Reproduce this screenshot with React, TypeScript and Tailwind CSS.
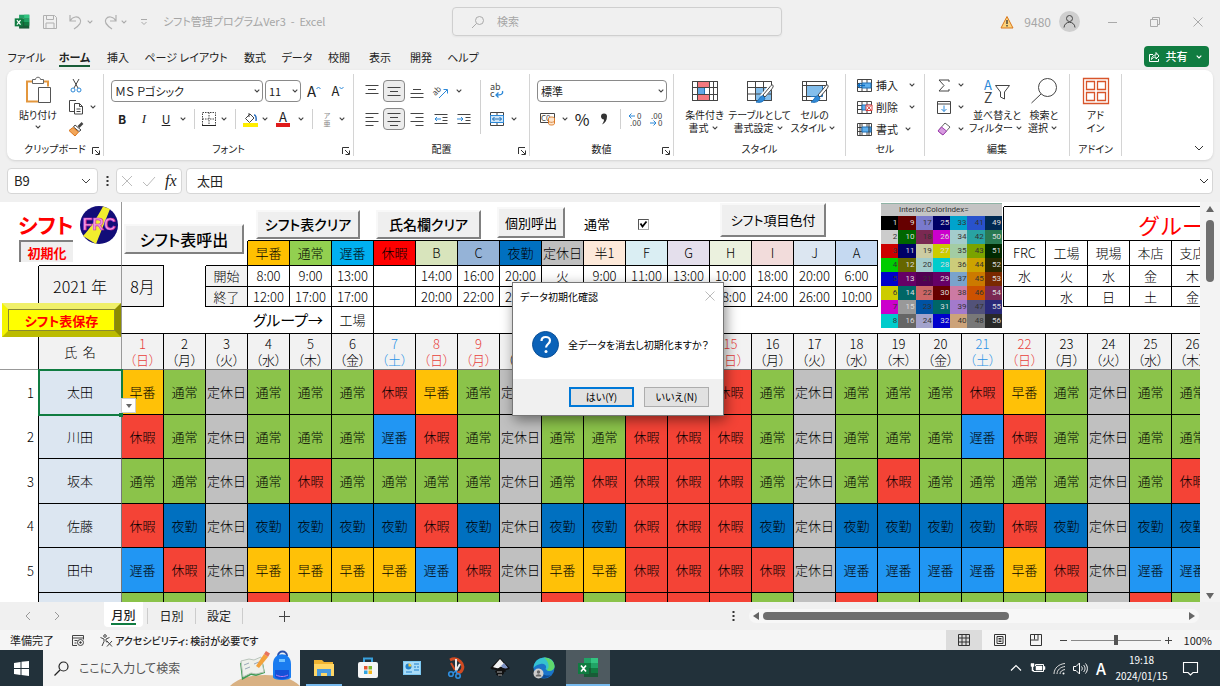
import { useState } from 'react';
import type { ReactNode } from 'react';

const SHIFTS: Record<string, { label: string; color: string }> = {
  H: { label: '早番', color: 'bg-[#ffc107]' },
  T: { label: '通常', color: 'bg-[#8bc34a]' },
  C: { label: '定休日', color: 'bg-[#c0c0c0]' },
  K: { label: '休暇', color: 'bg-[#f44336]' },
  D: { label: '遅番', color: 'bg-[#2196f3]' },
  Y: { label: '夜勤', color: 'bg-[#0070c0]' },
};

// one letter per day, see SHIFTS
const STAFF = [
  { name: '太田', days: 'HTCTTTKHTCTTTKKTCTTTKHTCTT', height: 'h-[45px]' },
  { name: '川田', days: 'KTCTTTDKTCTTKKKTCTTTDKTCTT', height: 'h-11' },
  { name: '坂本', days: 'TTCTKTTTTCTKKKKTCTKTTTTCTK', height: 'h-[45px]' },
  { name: '佐藤', days: 'KYCYYYYKYCYYKKKYCYYYYKYCYY', height: 'h-11' },
  { name: '田中', days: 'DKCHHHHDKCHHKKKKCDDDDHKCDD', height: 'h-[45px]' },
  { name: '', days: 'TTCKTTTTTCKTKKKTCKTTTTTCKT', height: 'h-11' },
];

const LEGEND = [
  { label: '早番', color: 'bg-[#ffc000]', start: '8:00', end: '12:00' },
  { label: '通常', color: 'bg-[#92d050]', start: '9:00', end: '17:00' },
  { label: '遅番', color: 'bg-[#00b0f0]', start: '13:00', end: '17:00' },
  { label: '休暇', color: 'bg-[#ff0000]', start: '', end: '' },
  { label: 'B', color: 'bg-[#d8e4bc]', start: '14:00', end: '20:00' },
  { label: 'C', color: 'bg-[#95b3d7]', start: '16:00', end: '22:00' },
  { label: '夜勤', color: 'bg-[#0070c0]', start: '20:00', end: '29:00' },
  { label: '定休日', color: 'bg-[#bfbfbf]', start: '火', end: '' },
  { label: '半1', color: 'bg-[#fde9d9]', start: '9:00', end: '' },
  { label: 'F', color: 'bg-[#daeef3]', start: '11:00', end: '' },
  { label: 'G', color: 'bg-[#e4dfec]', start: '13:00', end: '' },
  { label: 'H', color: 'bg-[#ebf1de]', start: '10:00', end: '18:00' },
  { label: 'I', color: 'bg-[#f2dcdb]', start: '18:00', end: '24:00' },
  { label: 'J', color: 'bg-[#dce6f1]', start: '20:00', end: '26:00' },
  { label: 'A', color: 'bg-[#c5d9f1]', start: '6:00', end: '10:00' },
];

const GROUPS = [
  ['FRC', '水', ''],
  ['工場', '火', '水'],
  ['現場', '水', '日'],
  ['本店', '金', '土'],
  ['支店', '木', '金'],
];

const WEEK = ['日', '月', '火', '水', '木', '金', '土'];
const RED_DAYS = [1, 8, 9, 15, 22];
const BLUE_DAYS = [7, 14, 21];

const PALETTE = [
  ['bg-black', 'bg-[#660000]', 'bg-[#7a7acc]', 'bg-[#000066]', 'bg-[#00a3cc]', 'bg-[#2952cc]', 'bg-[#002952]'],
  ['bg-[#cccccc]', 'bg-[#006600]', 'bg-[#7a2952]', 'bg-[#cc00cc]', 'bg-[#a3cccc]', 'bg-[#29a3a3]', 'bg-[#297a52]'],
  ['bg-[#cc0000]', 'bg-[#000066]', 'bg-[#cccca3]', 'bg-[#cccc00]', 'bg-[#a3cca3]', 'bg-[#7aa300]', 'bg-[#002900]'],
  ['bg-[#00cc00]', 'bg-[#666600]', 'bg-[#a3cccc]', 'bg-[#00cccc]', 'bg-[#cccc7a]', 'bg-[#cca300]', 'bg-[#292900]'],
  ['bg-[#0000cc]', 'bg-[#660066]', 'bg-[#520052]', 'bg-[#660066]', 'bg-[#7aa3cc]', 'bg-[#cc7a00]', 'bg-[#7a2900]'],
  ['bg-[#cccc00]', 'bg-[#006666]', 'bg-[#cc6666]', 'bg-[#660000]', 'bg-[#cc7aa3]', 'bg-[#cc5200]', 'bg-[#7a2952]'],
  ['bg-[#cc00cc]', 'bg-[#999999]', 'bg-[#0052a3]', 'bg-[#006666]', 'bg-[#a37acc]', 'bg-[#525279]', 'bg-[#292979]'],
  ['bg-[#00cccc]', 'bg-[#666666]', 'bg-[#a3a3cc]', 'bg-[#0000cc]', 'bg-[#cca37a]', 'bg-[#787878]', 'bg-[#292929]'],
];

const TABS = [
  { label: 'ファイル', width: 'w-[49px]' },
  { label: 'ホーム', width: 'w-[47px]' },
  { label: '挿入', width: 'w-10' },
  { label: 'ページ レイアウト', width: 'w-24' },
  { label: '数式', width: 'w-[42px]' },
  { label: 'データ', width: 'w-[42px]' },
  { label: '校閲', width: 'w-[42px]' },
  { label: '表示', width: 'w-10' },
  { label: '開発', width: 'w-[42px]' },
  { label: 'ヘルプ', width: 'w-[42px]' },
];

const Svg = ({ w, h, children }: { w: number; h: number; children: ReactNode }) => (
  <svg width={w} height={h} viewBox={`0 0 ${w} ${h}`} fill="none" stroke="#444" className="shrink-0 overflow-visible">
    {children}
  </svg>
);

const Chevron = ({ color = '#444' }: { color?: string }) => (
  <span className="flex w-3 shrink-0 items-center justify-center">
    <Svg w={6} h={4}>
      <path d="M.7.7 3 3 5.3.7" stroke={color} strokeWidth="1.1" />
    </Svg>
  </span>
);

const Sep = () => <span className="mx-[5px] h-5 w-px shrink-0 self-center bg-[#d0d0d0]" />;

const Tool = ({ label, width = 'w-[22px]', on, children }: { label: string; width?: string; on?: boolean; children: ReactNode }) => (
  <button
    aria-label={label}
    className={`flex h-[22px] shrink-0 items-center justify-center ${width} ${on ? 'rounded border border-[#888] bg-[#ececec]' : ''}`}
  >
    {children}
  </button>
);

const BigTool = ({ icon, lines, width, arrow }: { icon: ReactNode; lines: string[]; width: string; arrow?: boolean }) => (
  <button className={`flex shrink-0 flex-col items-center whitespace-nowrap text-[10px] leading-[13px] ${width}`}>
    <span className="mb-1 flex h-[27px] items-center">{icon}</span>
    <span>{lines[0]}</span>
    <span className="flex items-center">
      {lines[1]}
      {arrow && <Chevron />}
    </span>
  </button>
);

const Group = ({ title, width, launcher, children }: { title: string; width: string; launcher?: boolean; children: ReactNode }) => (
  <section className={`my-1 flex shrink-0 flex-col border-r border-[#d4d4d4] ${width}`}>
    <div className="flex h-[68px] shrink-0">{children}</div>
    <div className="relative flex h-3.5 items-center justify-center text-[10px] leading-[14px]">
      {title}
      {launcher && (
        <button aria-label={`${title}の設定`} className="absolute right-[3px] top-[5px]">
          <Svg w={8} h={8}>
            <path d="M.5 7V.5H7M3 3l4 4M7.5 3.5v4h-4" stroke="#333" />
          </Svg>
        </button>
      )}
    </div>
  </section>
);

const Lines = ({ d }: { d: string }) => (
  <Svg w={14} h={14}>
    <path d={d} />
  </Svg>
);

const ExcelLogo = ({ size }: { size: number }) => (
  <svg width={size} height={size} viewBox="0 0 22 22">
    <path d="M7 1h14v5H7z" fill="#21a366" />
    <path d="M14 1h7v5h-7z" fill="#33c481" />
    <path d="M7 6h14v5H7z" fill="#107c41" />
    <path d="M14 6h7v5h-7z" fill="#21a366" />
    <path d="M7 11h14v9H7z" fill="#185c37" />
    <path d="M14 11h7v5h-7z" fill="#107c41" />
    <path d="M1 6h11v11H1z" fill="#107c41" />
    <path d="m4 8.500 5 6M9 8.500l-5 6" stroke="#fff" strokeWidth="1.700" />
  </svg>
);

const TitleBar = () => (
  <header className="flex h-[43px] shrink-0 items-center text-[#a6a6a6]">
    <div className="flex w-[452px] shrink-0 items-center pl-3.5">
      <ExcelLogo size={16} />
      <button aria-label="上書き保存" className="ml-3">
        <Svg w={16} h={16}>
          <path d="M1.500 1.500h11l2 2v11h-13zM4.500 1.500v4h7v-4M4 14.500V9h8v5.500" stroke="#b0b0b0" />
        </Svg>
      </button>
      <button aria-label="元に戻す" className="ml-2.5 flex items-center">
        <Svg w={16} h={16}>
          <path d="M2 1v6h6M2 7c3-5 8-5 10-2s0 6-6 10" stroke="#b0b0b0" strokeWidth="1.200" />
        </Svg>
        <Chevron color="#aaa" />
      </button>
      <button aria-label="やり直し" className="ml-1.5 flex items-center">
        <Svg w={16} h={16}>
          <path d="M14 1v6H8M14 7C11 2 6 2 4 5s0 6 6 10" stroke="#b0b0b0" strokeWidth="1.200" />
        </Svg>
        <Chevron color="#aaa" />
      </button>
      <button aria-label="クイック アクセス ツール バーのユーザー設定" className="ml-2.5">
        <Svg w={8} h={8}>
          <path d="M1 1.500h6M1.500 4 4 6.500 6.500 4" stroke="#aaa" />
        </Svg>
      </button>
      <h1 className="ml-[15px] whitespace-nowrap text-[11px]">シフト管理プログラムVer3&nbsp; -&nbsp; Excel</h1>
    </div>
    <label className="flex h-[29px] w-[330px] shrink-0 items-center rounded border border-[#cfcfcf] pl-[18px] shadow-xs">
      <Svg w={14} h={14}>
        <circle cx="8.500" cy="5.500" r="4" stroke="#aaa" />
        <path d="M5.500 8.500 1 13" stroke="#aaa" />
      </Svg>
      <input aria-label="検索" placeholder="検索" className="ml-3 w-60 bg-transparent text-[11px] outline-none placeholder:text-[#a6a6a6]" />
    </label>
    <div className="flex flex-1 items-center justify-end pr-4 text-xs">
      <Svg w={14} h={14}>
        <path d="M7 1.500 13 13H1z" fill="#fcd27c" stroke="#d9781e" />
        <path d="M7 5v4M7 10v1.500" stroke="#333" strokeWidth="1.300" />
      </Svg>
      <span className="ml-2.5">9480</span>
      <span className="ml-2 flex size-[21px] items-center justify-center rounded-full bg-[#cfcfcf]">
        <Svg w={15} h={15}>
          <circle cx="7.500" cy="4.500" r="3" />
          <path d="M2 13.500c.5-7 10.500-7 11 0" />
        </Svg>
      </span>
      <button aria-label="最小化" className="ml-7">
        <Svg w={10} h={10}>
          <path d="M0 5.500h9" stroke="#aaa" />
        </Svg>
      </button>
      <button aria-label="元に戻す(縮小)" className="ml-8">
        <Svg w={10} h={10}>
          <path d="M.5 2.500h7v7h-7zM2.500 2.500v-2h7v7h-2" stroke="#aaa" />
        </Svg>
      </button>
      <button aria-label="閉じる" className="ml-8">
        <Svg w={12} h={12}>
          <path d="m1.500 1.500 9 9m0-9-9 9" stroke="#aaa" />
        </Svg>
      </button>
    </div>
  </header>
);

const TabRow = () => (
  <nav className="flex h-[27px] shrink-0 items-center pl-0.5 text-[11px]">
    {TABS.map((t) => (
      <button key={t.label} className={`flex h-full justify-center whitespace-nowrap pt-1.5 leading-4 ${t.width}`}>
        <span className={`h-[18px] ${t.label === 'ホーム' ? 'border-b-2 border-[#185c37] font-bold' : ''}`}>{t.label}</span>
      </button>
    ))}
    <button className="ml-auto mr-[11px] flex h-[21px] w-[65px] items-center justify-between whitespace-nowrap rounded bg-[#107c41] px-1 font-medium text-white">
      <Svg w={12} h={12}>
        <path d="M5 3.500H1.500v7h9V8M3.500 8.500c0-3 2-4.500 4.500-4.500V1.500L11 5 8 8V6C6 6 5 6.500 3.500 8.500z" stroke="#fff" />
      </Svg>
      <span>共有</span>
      <Chevron color="#fff" />
    </button>
  </nav>
);

const GridIcon = ({ brush }: { brush?: boolean }) => (
  <Svg w={28} h={26}>
    <path d="M1.500 3.500h24v19h-24z" fill="#fff" />
    <path d="M9.500 9.500h16v13h-16z" fill={brush ? '#83beec' : '#c8e1f5'} stroke="none" />
    <path d="M1.500 3.500h24v19h-24zM1.500 9.500h24M1.500 16h24M9.500 3.500v19M17.500 3.500v19" />
    <path d="M25.500 8 16 19" stroke="#fff" strokeWidth="5" />
    <path d="M26 7c2 0 1.500 2-1 5l-6 7-2-2 6-7c1.500-2 2-3 3-3z" fill="#fff" />
    <path d="M16.500 17.500 19 20c-1 4-5 5-9 4 3-1 3-5 6.500-6.500z" fill="#2f8ad8" stroke="#2271b8" />
  </Svg>
);

const CellIcon = ({ kind }: { kind: 'insert' | 'delete' | 'format' }) => (
  <Svg w={15} h={13}>
    <path d="M.5.500h14v12H.5zM.5 4.500h14M.5 8.500h14M5 .5v12M10 .5v12" fill="#fff" />
    <path d="M5 4h9v5H5z" fill="#5fb0ee" stroke="#1f6fb5" />
    {kind === 'insert' && <path d="M1 6.500h7M3.500 4 1 6.500 3.500 9" stroke="#0f6cbd" strokeWidth="1.400" />}
    {kind === 'delete' && <path d="M9 4h6v5.500H9zm1 .5 4 4.500m0-4.500L10 9" fill="#fff" stroke="#d83b3b" />}
    {kind === 'format' && <path d="M3 0v13M12 0v13" stroke="#333" />}
  </Svg>
);

const Ribbon = () => (
  <div className="mx-[7px] flex h-[90px] shrink-0 overflow-hidden rounded-lg bg-white text-[11px] shadow">
    <Group title="クリップボード" width="w-[97px]" launcher>
      <button className="ml-2 flex w-[46px] flex-col items-center whitespace-nowrap pt-0.5 text-[10px]">
        <Svg w={28} h={28}>
          <path d="M9 5.500H3v20h11M19 5.500h5v5" stroke="#e3973e" strokeWidth="2" />
          <path d="M8.500 3.500h3c0-3 5-3 5 0h3v4h-11z" fill="#fff" stroke="#666" />
          <path d="M14.500 11.500h12v15h-12z" fill="#fff" stroke="#555" />
        </Svg>
        <span className="mt-1 leading-[13px]">貼り付け</span>
        <span className="mt-1 flex h-1"><Chevron /></span>
      </button>
      <div className="ml-1 flex flex-col">
        <Tool label="切り取り">
          <Svg w={14} h={15}>
            <path d="M4 1l5 9M10 1 5 10" />
            <circle cx="4" cy="12" r="2" stroke="#2b88d8" />
            <circle cx="10" cy="12" r="2" stroke="#2b88d8" />
          </Svg>
        </Tool>
        <div className="flex">
          <Tool label="コピー">
            <Svg w={16} h={15}>
              <path d="M8 .5H1.500v11H6M6.500 3.500h5l3 3v7.500h-8zM11.500 3.500v3h3M8.500 9h4M8.500 11.500h4" />
            </Svg>
          </Tool>
          <Chevron />
        </div>
        <Tool label="書式のコピー/貼り付け">
          <Svg w={16} h={15}>
            <path d="m14.500 1-4 4" strokeWidth="2.500" />
            <path d="m7 3 6 5-2 1.500-5.500-4.500z" fill="#fff" />
            <path d="M5 5.500 10.500 10 7 14 1 8.500z" fill="#f2a65a" stroke="#d9741a" />
          </Svg>
        </Tool>
      </div>
    </Group>

    <Group title="フォント" width="w-[250px]" launcher>
      <div className="flex flex-col gap-1.5 pl-[7px] pt-1.5">
        <div className="flex gap-0.5">
          <SelectBox label="フォント名" value="ＭＳ Ｐゴシック" width="w-[152px]" />
          <SelectBox label="フォント サイズ" value="11" width="w-9" />
          <Tool label="フォント サイズの拡大">
            <span className="text-[15px]">A</span>
            <Svg w={5} h={12}><path d="M.5 4 2.500 2l2 2" stroke="#2b88d8" /></Svg>
          </Tool>
          <Tool label="フォント サイズの縮小">
            <span className="text-[13px]">A</span>
            <Svg w={5} h={12}><path d="m.5 2 2 2 2-2" stroke="#2b88d8" /></Svg>
          </Tool>
        </div>
        <div className="flex">
          <Tool label="太字"><b className="text-xs">B</b></Tool>
          <Tool label="斜体"><i className="font-['Liberation_Serif'] text-[13px]">I</i></Tool>
          <Tool label="下線"><u className="text-xs">U</u></Tool>
          <Chevron />
          <Sep />
          <Tool label="罫線" width="w-[18px]">
            <Svg w={14} h={14}>
              <path d="M.5 13V.5h13V13M7 .5V13M.5 7h13" strokeDasharray="1.500 1" />
              <path d="M0 13.500h14" stroke="#222" />
            </Svg>
          </Tool>
          <Chevron />
          <Sep />
          <Tool label="塗りつぶしの色" width="w-[18px]">
            <Svg w={15} h={15}>
              <path d="m7 2 4 4-4.500 4.500-4-4zM6 1v4" fill="#fff" />
              <path d="M11 3c2 0 2.500 3 2 6" stroke="#2b6fc0" strokeWidth="1.500" />
              <path d="M0 13h15" stroke="#ffed00" strokeWidth="4" />
            </Svg>
          </Tool>
          <Chevron />
          <Tool label="フォントの色" width="w-6">
            <span className="border-b-4 border-[#e01b1b] px-[3px] text-[13px] leading-[12px]">A</span>
          </Tool>
          <Chevron />
          <Sep />
          <Tool label="ふりがな" width="w-[18px]">
            <span className="text-[7px] leading-[8px] text-[#888]">ア<br />亜</span>
          </Tool>
          <Chevron />
        </div>
      </div>
    </Group>

    <Group title="配置" width="w-44" launcher>
      <div className="flex flex-col gap-1.5 pl-[7px] pt-1.5">
        <div className="flex">
          <Tool label="上揃え"><Lines d="M.5 1.500h13M3 5.500h8M.5 9.500h13" /></Tool>
          <Tool label="上下中央揃え" on><Lines d="M.5 3.500h13M3 7.500h8M.5 11.500h13" /></Tool>
          <Tool label="下揃え" width="w-6"><Lines d="M3 5.500h8M.5 9.500h13M.5 13.500h13" /></Tool>
          <Tool label="方向" width="w-6">
            <Svg w={16} h={15}>
              <text x="0" y="9" fontSize="8" fill="#444" stroke="none" transform="rotate(-45 5 8)">ab</text>
              <path d="m6 14 8-8M10.500 5.500H14.500V9.500" stroke="#2b88d8" />
            </Svg>
          </Tool>
          <Chevron />
        </div>
        <div className="flex">
          <Tool label="左揃え"><Lines d="M.5 1.500h13M.5 5.500h8M.5 9.500h13M.5 13.500h8" /></Tool>
          <Tool label="中央揃え" on><Lines d="M.5 1.500h13M3 5.500h8M.5 9.500h13M3 13.500h8" /></Tool>
          <Tool label="右揃え" width="w-6"><Lines d="M.5 1.500h13M5.500 5.500h8M.5 9.500h13M5.500 13.500h8" /></Tool>
          <Tool label="インデントを減らす" width="w-6">
            <Svg w={14} h={12}>
              <path d="M.5 1.500h13M8.500 4.500h5M8.500 7.500h5M.5 10.500h13" />
              <path d="M1 6h6M3 4 1 6l2 2" stroke="#2b88d8" />
            </Svg>
          </Tool>
          <Tool label="インデントを増やす">
            <Svg w={14} h={12}>
              <path d="M.5 1.500h13M8.500 4.500h5M8.500 7.500h5M.5 10.500h13" />
              <path d="M0 6h6M4 4l2 2-2 2" stroke="#2b88d8" />
            </Svg>
          </Tool>
        </div>
      </div>
      <span className="mx-[5px] mt-1.5 h-[54px] w-px bg-[#d0d0d0]" />
      <div className="flex flex-col gap-1.5 pt-1.5">
        <Tool label="折り返して全体を表示する">
          <Svg w={14} h={14}>
            <text x="0" y="6" fontSize="9" fill="#444" stroke="none">ab</text>
            <text x="0" y="13" fontSize="9" fill="#444" stroke="none">c</text>
            <path d="M12.500 7c1 4-3 4-6 4M8.500 8.500 6 11l2.500 2.500" stroke="#2b88d8" strokeWidth="1.300" />
          </Svg>
        </Tool>
        <div className="flex">
          <Tool label="セルを結合して中央揃え">
            <Svg w={14} h={14}>
              <path d="M.5.500h13v13H.5zM7 .5v13" fill="#fff" />
              <path d="M.5 3.500h13v7H.5z" fill="#cfe6f9" stroke="#2b88d8" />
              <path d="M2.500 7h9M4.500 5l-2 2 2 2M9.500 5l2 2-2 2" stroke="#1f6fb5" />
            </Svg>
          </Tool>
          <Chevron />
        </div>
      </div>
    </Group>

    <Group title="数値" width="w-36" launcher>
      <div className="flex flex-col gap-1.5 pl-[7px] pt-1.5">
        <SelectBox label="数値の書式" value="標準" width="w-[130px]" />
        <div className="flex">
          <Tool label="通貨表示形式">
            <Svg w={16} h={14}>
              <path d="M.5 1.500h14v9H.5z" />
              <text x="1" y="9" fontSize="8" fill="#444" stroke="none">C0</text>
              <path d="M8.500 6.500c0-2 6-2 6 0v5c0 2-6 2-6 0zM8.500 9c0 1.500 6 1.500 6 0" fill="#fce5cd" stroke="#dd7a26" />
            </Svg>
          </Tool>
          <Chevron />
          <Tool label="パーセント スタイル"><span className="text-base">%</span></Tool>
          <Tool label="桁区切りスタイル">
            <Svg w={8} h={12}>
              <path d="M1 3.500a3 3 0 1 1 6 0c0 4-2 6.500-5 8 1.500-2 2-3.500 2-5-2 0-3-1.500-3-3z" fill="#333" stroke="none" />
            </Svg>
          </Tool>
          <Sep />
          <Tool label="小数点以下の表示桁数を増やす" width="w-[18px]">
            <Svg w={15} h={15}>
              <path d="M1 4h6M3.500 1.500 1 4l2.500 2.500" stroke="#2b88d8" />
              <text x="9" y="7" fontSize="8" fill="#444" stroke="none">0</text>
              <text x="2" y="14" fontSize="8" fill="#444" stroke="none">.00</text>
            </Svg>
          </Tool>
          <Tool label="小数点以下の表示桁数を減らす" width="w-6">
            <Svg w={15} h={15}>
              <text x="2" y="7" fontSize="8" fill="#444" stroke="none">.00</text>
              <text x="9" y="14" fontSize="8" fill="#444" stroke="none">0</text>
              <path d="M1 11h6M4.500 8.500 7 11l-2.500 2.500" stroke="#2b88d8" />
            </Svg>
          </Tool>
        </div>
      </div>
    </Group>

    <Group title="スタイル" width="w-[172px]">
      <div className="flex pl-[3px] pt-[3px]">
        <BigTool
          width="w-[55px]"
          lines={['条件付き', '書式']}
          arrow
          icon={
            <Svg w={26} h={22}>
              <path d="M.5 1.500h25v19H.5z" fill="#fff" />
              <path d="M5.500 1.500h12v6h-12zM5.500 14.500h12v6h-12z" fill="#f4797f" stroke="#c23b45" />
              <path d="M5.500 7.500h7v7h-7z" fill="#62a8e5" stroke="#1f6fb5" />
              <path d="M.5 1.500h25v19H.5zM.5 7.500h25M.5 14.500h25M5.500 1.500v19M17.500 1.500v19M21.500 1.500v19" />
            </Svg>
          }
        />
        <BigTool width="w-[55px]" lines={['テーブルとして', '書式設定']} arrow icon={<GridIcon brush />} />
        <BigTool
          width="w-[55px]"
          lines={['セルの', 'スタイル']}
          arrow
          icon={
            <Svg w={28} h={26}>
              <path d="M1.500 3.500h24v19h-24z" fill="#fff" />
              <path d="M5.500 7.500h16v11h-16z" fill="#83beec" stroke="#2271b8" />
              <path d="M1.500 3.500h24v19h-24zM5.500 3.500v19M1.500 7.500h24M1.500 18.500h8" />
              <path d="M26 7c2 0 1.500 2-1 5l-6 7-2-2 6-7c1.500-2 2-3 3-3z" fill="#fff" />
              <path d="M16.500 17.500 19 20c-1 4-5 5-9 4 3-1 3-5 6.500-6.500z" fill="#2f8ad8" stroke="#2271b8" />
            </Svg>
          }
        />
      </div>
    </Group>

    <Group title="セル" width="w-[79px]">
      <div className="flex flex-col pl-[11px]">
        <button className="flex h-[22px] items-center gap-1"><CellIcon kind="insert" />挿入<span className="ml-1"><Chevron /></span></button>
        <button className="flex h-[22px] items-center gap-1"><CellIcon kind="delete" />削除<span className="ml-1"><Chevron /></span></button>
        <button className="flex h-[22px] items-center gap-1"><CellIcon kind="format" />書式<Chevron /></button>
      </div>
    </Group>

    <Group title="編集" width="w-[145px]">
      <div className="flex w-[46px] flex-col pl-2">
        <button aria-label="合計" className="flex h-[22px] items-center">
          <span className="flex w-[22px] justify-center">
            <Svg w={12} h={13}><path d="M11 3V1H1l5 5.500L1 12h10v-2" /></Svg>
          </span>
          <Chevron />
        </button>
        <button aria-label="フィル" className="flex h-[22px] items-center">
          <span className="flex w-[22px] justify-center">
            <Svg w={14} h={13}>
              <path d="M.5.500h13v12H.5zM.5 3h13" />
              <path d="M7 4.500v6M4.500 8 7 10.500 9.500 8" stroke="#2b88d8" />
            </Svg>
          </span>
          <Chevron />
        </button>
        <button aria-label="クリア" className="flex h-[22px] items-center">
          <span className="flex w-[22px] justify-center">
            <Svg w={14} h={14}>
              <path d="m8 1 5 4-7 8-5-4z" fill="#fff" stroke="#666" />
              <path d="m4.500 5 5 4L6 13 1 9z" fill="#d79be0" stroke="#a33fb3" />
            </Svg>
          </span>
          <Chevron />
        </button>
      </div>
      <div className="flex pt-[3px]">
        <BigTool
          width="w-[52px]"
          lines={['並べ替えと', 'フィルター']}
          arrow
          icon={
            <Svg w={28} h={26}>
              <text x="1" y="12" fontSize="13" fill="#2b88d8" stroke="none">A</text>
              <text x="1" y="25" fontSize="14" fill="#444" stroke="none">Z</text>
              <path d="M12.500 7.500h14l-5 6.500v7l-4-2v-5z" />
            </Svg>
          }
        />
        <BigTool
          width="w-[42px]"
          lines={['検索と', '選択']}
          arrow
          icon={
            <Svg w={28} h={27}>
              <circle cx="17.500" cy="10.500" r="9" />
              <path d="M11 17 1.500 26" />
            </Svg>
          }
        />
      </div>
    </Group>

    <Group title="アドイン" width="w-[52px]">
      <div className="flex w-full justify-center pt-[3px]">
        <BigTool
          width="w-11"
          lines={['アド', 'イン']}
          icon={
            <Svg w={26} h={26}>
              <path d="M.5.500h25v25H.5zM3.500 3.500h8v8h-8zM14.500 3.500h8v8h-8zM3.500 14.500h8v8h-8zM14.500 14.500h8v8h-8z" stroke="#d8552b" strokeWidth="1.300" />
            </Svg>
          }
        />
      </div>
    </Group>
    <button aria-label="リボンを折りたたむ" className="mb-2 ml-auto mr-[9px] self-end">
      <Svg w={10} h={7}>
        <path d="m1 1 4 4 4-4" stroke="#333" />
      </Svg>
    </button>
  </div>
);

function SelectBox({ label, value, width }: { label: string; value: string; width: string }) {
  return (
    <span className={`relative flex h-[22px] shrink-0 ${width}`}>
      <select aria-label={label} className="w-full appearance-none rounded border border-[#8a8a8a] bg-white pl-[3px] text-[11px]">
        <option>{value}</option>
      </select>
      <span className="pointer-events-none absolute inset-y-0 right-0 flex">
        <Chevron />
      </span>
    </span>
  );
}

const FormulaBar = () => (
  <div className="mx-[7px] my-2 flex h-[26px] shrink-0 text-[13px]">
    <label className="flex w-[91px] items-center justify-between rounded border border-[#d6d6d6] bg-white px-1.5">
      <input aria-label="名前ボックス" defaultValue="B9" className="w-14 outline-none" />
      <Svg w={10} h={7}><path d="m1 1 4 4 4-4" /></Svg>
    </label>
    <span className="flex w-[18px] items-center justify-center">
      <Svg w={3} h={12}><path d="M1.500 1v2M1.500 5v2M1.500 9v2" stroke="#333" strokeWidth="2" /></Svg>
    </span>
    <div className="flex w-[66px] items-center justify-around rounded border border-[#d6d6d6] bg-white">
      <button aria-label="キャンセル"><Svg w={12} h={12}><path d="m1 1 10 10m0-10L1 11" stroke="#bbb" /></Svg></button>
      <button aria-label="入力"><Svg w={14} h={12}><path d="m1 7 4 4 8-9" stroke="#bbb" /></Svg></button>
      <button aria-label="関数の挿入" className="font-['Liberation_Serif'] text-base italic">fx</button>
    </div>
    <label className="ml-1 flex flex-1 items-center justify-between rounded border border-[#d6d6d6] bg-white pl-2.5 pr-[3px]">
      <input aria-label="数式バー" defaultValue="太田" className="flex-1 outline-none" />
      <Svg w={10} h={7}><path d="m1 1 4 4 4-4" stroke="#333" /></Svg>
    </label>
  </div>
);

const cell = 'border-r border-b border-black';

const ShiftTable = () => (
  <table className="w-[1214px] table-fixed border-separate border-spacing-0 whitespace-nowrap text-center text-[13px] font-light leading-4 [&_td]:p-0 [&_th]:p-0 [&_th]:font-light">
    <colgroup>
      <col className="w-[39px]" />
      <col className="w-[83px]" />
      {Array.from({ length: 26 }, (_, i) => <col key={i} className="w-[42px]" />)}
    </colgroup>
    <thead>
      <tr className="h-[5px]">
        <td />
        <td className="border-r border-[#999]" />
        <td colSpan={21} />
        <td colSpan={5} className="border-b border-black" />
      </tr>
      <tr className="h-[34px]">
        <td />
        <td className="border-r border-[#999]" />
        <td colSpan={3} />
        <td colSpan={15} className="border-b border-black" />
        <td colSpan={3} className="border-r border-black" />
        <td colSpan={5} className="border-b border-black text-left text-[22px] font-normal text-[#ff0000] [font-feature-settings:normal]">
          <span className="ml-[134px]">グループ</span>
        </td>
      </tr>
      <tr className="h-[25px]">
        <td />
        <td className="border-b border-r border-b-black border-r-[#999]" />
        <td className="border-b border-black" />
        <td />
        <td className={cell} />
        {LEGEND.map((l) => <th key={l.label} className={`${cell} ${l.color}`}>{l.label}</th>)}
        <td colSpan={3} className="border-r border-black" />
        {GROUPS.map((g) => <th key={g[0]} className={cell}>{g[0]}</th>)}
      </tr>
      <tr className="h-[21px]">
        <td className="border-r border-black" />
        <td rowSpan={2} className="border-b border-r border-b-black border-r-[#999] bg-[#f2f2f2] text-base">2021 年</td>
        <td rowSpan={2} className={`${cell} bg-[#f2f2f2] text-base`}>8月</td>
        <td rowSpan={2} className="border-r border-black" />
        <th className={`${cell} bg-[#f2f2f2]`}>開始</th>
        {LEGEND.map((l) => <td key={l.label} className={cell}>{l.start}</td>)}
        <td rowSpan={2} colSpan={3} className="border-r border-black" />
        {GROUPS.map((g) => <td key={g[0]} className={cell}>{g[1]}</td>)}
      </tr>
      <tr className="h-5">
        <td className="border-r border-black" />
        <th className={`${cell} bg-[#f2f2f2]`}>終了</th>
        {LEGEND.map((l) => <td key={l.label} className={cell}>{l.end}</td>)}
        {GROUPS.map((g) => <td key={g[0]} className={cell}>{g[2]}</td>)}
      </tr>
      <tr className="h-[27px]">
        <td className="border-r border-black" />
        <td className="border-b border-r border-b-black border-r-[#999]" />
        <td colSpan={5} className={`${cell} pr-2! text-right text-[15px] font-normal`}>グループ→</td>
        <td className={cell}>工場</td>
        <td colSpan={20} className="border-b border-black" />
      </tr>
      <tr className="h-9">
        <td className="border-b border-r border-b-[#999] border-r-black" />
        <th className="border-b border-r border-[#999] bg-[#f2f2f2]">氏&nbsp; 名</th>
        {Array.from({ length: 26 }, (_, i) => i + 1).map((d) => (
          <th
            key={d}
            className={`border-b border-r border-b-[#777] border-r-black bg-[#f2f2f2] ${
              RED_DAYS.includes(d) ? 'text-[#e8413a]' : BLUE_DAYS.includes(d) ? 'text-[#2b93e6]' : ''
            }`}
          >
            {d}
            <br />（{WEEK[(d - 1) % 7]}）
          </th>
        ))}
      </tr>
    </thead>
    <tbody>
      {STAFF.map((s, row) => (
        <tr key={row} className={s.height}>
          <td className="border-r border-black pr-1! text-right">{s.name ? row + 1 : ''}</td>
          <th
            className={`border-b border-r border-b-black border-r-[#777] bg-[#dce6f1] ${
              row === 0 ? 'outline-2 -outline-offset-1 outline-[#107c41]' : ''
            }`}
          >
            {s.name}
          </th>
          {s.days.split('').map((k, i) => (
            <td key={i} className={`${cell} ${SHIFTS[k].color}`}>{SHIFTS[k].label}</td>
          ))}
        </tr>
      ))}
    </tbody>
  </table>
);

const FormButton = ({ place, children }: { place: string; children: ReactNode }) => (
  <button
    className={`absolute flex items-center justify-center whitespace-nowrap border-2 border-b-[#808080] border-l-[#f8f8f8] border-r-[#808080] border-t-[#f8f8f8] bg-[#efefef] ${place}`}
  >
    {children}
  </button>
);

const ColorChart = () => (
  <div className="absolute left-[881px] top-px flex h-[125px] w-[121px] flex-col bg-[#c4c4c4] font-['Roboto',sans-serif] text-[8px] leading-none text-[#333]">
    <div className="flex h-[13px] items-center border-t border-[#8fb3a5] pl-[18px]">Interior.ColorIndex=</div>
    {PALETTE.map((r, y) => (
      <div key={y} className="grid flex-1 grid-cols-7">
        {r.map((c, x) => (
          <span
            key={x}
            className={`flex items-center justify-end pr-px ${c} ${x === 1 || x === 3 || x === 6 || (x === 0 && y === 0) ? 'text-[#ddd]' : ''}`}
          >
            {x * 8 + y + 1}
          </span>
        ))}
      </div>
    ))}
  </div>
);

const ConfirmDialog = ({ onClose }: { onClose: () => void }) => (
  <div
    role="dialog"
    aria-label="データ初期化確認"
    className="absolute left-[512px] top-20 flex w-[212px] flex-col border border-[#777] bg-white text-[10px] shadow-[2px_4px_12px_rgba(0,0,0,0.45)]"
  >
    <div className="flex h-[26px] items-center justify-between pl-[7px] pr-2">
      <span>データ初期化確認</span>
      <button aria-label="閉じる" onClick={onClose}>
        <Svg w={10} h={10}><path d="m.5.5 9 9m0-9-9 9" stroke="#bbb" /></Svg>
      </button>
    </div>
    <div className="flex h-[70px] items-center pl-[19px]">
      <svg width="27" height="27" viewBox="0 0 27 27">
        <circle cx="13.500" cy="13.500" r="13" fill="#0b62b8" stroke="#0a4f96" />
        <path d="M9.500 10c0-5.500 8.500-5 8.500-.5 0 3.500-4 3.500-4 7" fill="none" stroke="#fff" strokeWidth="2.200" />
        <circle cx="14" cy="20.500" r="1.500" fill="#fff" />
      </svg>
      <p className="ml-[9px] whitespace-nowrap">全データを消去し初期化ますか？</p>
    </div>
    <div className="flex h-9 items-center justify-end gap-2.5 bg-[#f0f0f0] pr-3.5">
      <button onClick={onClose} className="h-5 w-[65px] border-2 border-[#0078d7] bg-[#e1e1e1] leading-none">はい(Y)</button>
      <button onClick={onClose} className="h-5 w-[65px] border border-[#adadad] bg-[#e1e1e1] leading-none">いいえ(N)</button>
    </div>
  </div>
);

const Sheet = () => {
  const [open, setOpen] = useState(true);
  const [normal, setNormal] = useState(true);

  return (
    <main className="flex min-h-0 flex-1">
      <div className="relative flex-1 overflow-hidden bg-white text-black">
        <ShiftTable />

        <div className="absolute left-[18px] top-2 text-[21px] font-bold leading-7 text-[#ff0000]">シフト</div>
        <svg className="absolute left-[79px] top-[3px]" width="40" height="40" viewBox="0 0 40 40">
          <circle cx="20" cy="20" r="19" fill="#120d78" />
          <path d="M24 1.500 31 4 17 39 4 31c6-6 14-18 20-29.500z" fill="#f2ee2e" />
          <text x="20" y="25" textAnchor="middle" fontSize="16" fontWeight="bold" fontFamily="Liberation Sans" fill="#f79be0" stroke="#c22fb4" strokeWidth=".6">FRC</text>
        </svg>
        <button className="absolute left-[19px] top-[38px] h-[22px] w-[54px] border-l-2 border-t-2 border-[#808080] bg-[#efefef] text-[13px] font-bold leading-none text-[#ff0000]">
          初期化
        </button>
        <FormButton place="left-[124px] top-[22px] h-[30px] w-[120px] text-[16px] font-medium">シフト表呼出</FormButton>
        <FormButton place="left-[256px] top-2 h-[29px] w-[104px] text-[14px] font-medium">シフト表クリア</FormButton>
        <FormButton place="left-[376px] top-2 h-[29px] w-[105px] text-[14px] font-medium">氏名欄クリア</FormButton>
        <FormButton place="left-[497px] top-[5px] h-[31px] w-[68px] text-[13px]">個別呼出</FormButton>
        <label className="absolute left-[584px] top-[14px] flex items-center gap-7 text-[13px] leading-4">
          通常
          <span className="relative flex">
            <input
              type="checkbox"
              checked={normal}
              onChange={() => setNormal(!normal)}
              className="size-[11px] appearance-none border border-[#aaa] border-l-[#555] border-t-[#555] bg-white"
            />
            {normal && (
              <span className="pointer-events-none absolute inset-0">
                <Svg w={11} h={11}><path d="m2.500 4.500 2 3 4-5" stroke="#000" strokeWidth="1.800" /></Svg>
              </span>
            )}
          </span>
        </label>
        <FormButton place="left-[720px] top-px h-[34px] w-[106px] text-[13px]">シフト項目色付</FormButton>
        <ColorChart />
        <button className="absolute left-[2px] top-[101px] h-[34px] w-[119px] border-[6px] border-b-[#bcbc00] border-l-[#f5f500] border-r-[#8c8c00] border-t-[#f0f06a] bg-[#ffff00] text-[13px] font-bold leading-none text-[#ff0000] ring-1 ring-inset ring-[#8a8a30]">
          シフト表保存
        </button>
        <span className="absolute left-[119px] top-[211px] size-1 bg-[#107c41]" />
        <button aria-label="氏名を選択" className="absolute left-[121px] top-[196px] flex size-[15px] items-center justify-center border border-[#ccc] bg-white">
          <Svg w={6} h={4}><path d="M0 0h6L3 4z" fill="#666" stroke="none" /></Svg>
        </button>
        {open && <ConfirmDialog onClose={() => setOpen(false)} />}
      </div>
      <div className="flex w-5 flex-col items-center gap-2 bg-[#f3f3f3] pb-[3px] pt-1">
        <Svg w={10} h={6}><path d="M5 0 9 6H1z" fill="#666" stroke="none" /></Svg>
        <span className="h-[62px] w-2 rounded-full bg-[#6e6e6e]" />
        <span className="mt-auto"><Svg w={10} h={6}><path d="M1 0h8L5 6z" fill="#666" stroke="none" /></Svg></span>
      </div>
    </main>
  );
};

const SheetTabs = () => (
  <div className="flex h-7 shrink-0 items-center bg-[#f0f0f0] text-xs">
    <button aria-label="前のシート" className="ml-6"><Svg w={8} h={10}><path d="M6 1 2 5l4 4" stroke="#999" /></Svg></button>
    <button aria-label="次のシート" className="ml-[21px]"><Svg w={8} h={10}><path d="m2 1 4 4-4 4" stroke="#999" /></Svg></button>
    <button className="mb-[3px] ml-[43px] h-[25px] w-[39px] rounded-b bg-white">
      <span className="border-b-2 border-[#107c41] font-medium">月別</span>
    </button>
    <button className="ml-1 h-4 w-12 border-l border-[#ccc] leading-4">日別</button>
    <button className="h-4 w-12 border-x border-[#ccc] leading-4">設定</button>
    <button aria-label="新しいシート" className="ml-9"><Svg w={11} h={11}><path d="M5.500 0v11M0 5.500h11" /></Svg></button>
    <div className="ml-auto flex items-center">
      <Svg w={3} h={12}><path d="M1.500 1v2M1.500 5v2M1.500 9v2" stroke="#333" strokeWidth="2" /></Svg>
      <div className="ml-3.5 mr-[21px] flex h-3.5 w-[450px] items-center rounded-full bg-[#f7f7f7] px-1">
        <Svg w={6} h={8}><path d="M6 0v8L0 4z" fill="#666" stroke="none" /></Svg>
        <span className="ml-1 h-2 w-[246px] rounded-full bg-[#6e6e6e]" />
        <span className="ml-auto"><Svg w={6} h={8}><path d="M0 0v8l6-4z" fill="#666" stroke="none" /></Svg></span>
      </div>
    </div>
  </div>
);

const StatusBar = () => (
  <footer className="flex h-5 shrink-0 items-center bg-[#f5f5f5] pl-2.5 text-[11px]">
    <span>準備完了</span>
    <span className="ml-[17px]">
      <Svg w={14} h={13}>
        <path d="M6 11.500H1.500v-10h11v4M1.500 4h11M3.500 6.500h3M3.500 9h2" />
        <circle cx="9.500" cy="8.500" r="3" />
        <circle cx="9.500" cy="8.500" r=".8" fill="#333" />
      </Svg>
    </span>
    <span className="ml-[15px]">
      <Svg w={13} h={13}>
        <circle cx="5" cy="2" r="1.300" />
        <path d="M.5 3.500 4 5v2.500L2 12M9.500 3.500 6 5v2l1 1.500M7 7l5 5.500M12 7l-5 5.500" />
      </Svg>
    </span>
    <span className="ml-0.5 text-[10px] font-medium">アクセシビリティ: 検討が必要です</span>
    <div className="ml-auto flex h-full items-center">
      <button aria-label="標準" className="flex h-full w-9 items-center justify-center bg-[#dcdcdc]">
        <Svg w={12} h={12}><path d="M.5.500h11v11H.5zM.5 4h11M.5 8h11M4 .5v11M8 .5v11" stroke="#333" /></Svg>
      </button>
      <button aria-label="ページ レイアウト" className="flex w-9 justify-center">
        <Svg w={12} h={12}><path d="M.5.500h11v11H.5zM3 2.500h6v7H3zM4.500 4.500h3M4.500 6h3M4.500 7.500h3" stroke="#333" /></Svg>
      </button>
      <button aria-label="改ページ プレビュー" className="flex w-9 justify-center">
        <Svg w={12} h={12}><path d="M.5.500h11v11H.5zM4.500.500v5M8 .5v5M.5 6H8.500" stroke="#333" /></Svg>
      </button>
      <button aria-label="縮小" className="ml-1.5"><Svg w={7} h={7}><path d="M0 3.500h7" /></Svg></button>
      <input
        type="range"
        aria-label="ズーム"
        defaultValue={50}
        className="mx-1 h-3 w-[90px] appearance-none bg-[linear-gradient(#888,#888)] bg-[length:100%_1px] bg-center bg-no-repeat [&::-webkit-slider-thumb]:h-2.5 [&::-webkit-slider-thumb]:w-1 [&::-webkit-slider-thumb]:appearance-none [&::-webkit-slider-thumb]:bg-[#555]"
      />
      <button aria-label="拡大"><Svg w={7} h={7}><path d="M0 3.500h7M3.500 0v7" /></Svg></button>
      <span className="ml-3 mr-2">100%</span>
    </div>
  </footer>
);

const TaskIcon = ({ label, state, children }: { label: string; state?: 'open' | 'active'; children: ReactNode }) => (
  <button
    aria-label={label}
    className={`flex h-full w-11 items-center justify-center ${state === 'active' ? 'bg-[#4e5a60] shadow-[inset_0_-2px_#76b9ed]' : ''}`}
  >
    <span className={`flex h-full w-9 items-center justify-center ${state === 'open' ? 'shadow-[inset_0_-2px_#76b9ed]' : ''}`}>{children}</span>
  </button>
);

const Taskbar = () => (
  <div className="flex h-9 shrink-0 items-center bg-[#22313a] text-white">
    <button aria-label="スタート" className="flex w-[43px] justify-center">
      <svg width="15" height="15" viewBox="0 0 15 15" fill="#fff">
        <path d="M0 2 6.500 1v6H0zM7.500.800 15 0v7H7.500zM0 8h6.500v6L0 13zM7.500 8H15v7l-7.500-1z" />
      </svg>
    </button>
    <label className="flex h-full w-[257px] items-center bg-[#f3f3f3] pl-[11px]">
      <Svg w={15} h={15}>
        <circle cx="9.500" cy="5.500" r="4.500" stroke="#222" strokeWidth="1.200" />
        <path d="M6 9 .5 14.500" stroke="#222" strokeWidth="1.200" />
      </Svg>
      <input aria-label="ここに入力して検索" placeholder="ここに入力して検索" className="ml-2.5 w-[151px] bg-transparent text-xs text-black outline-none placeholder:text-[#555]" />
      <svg width="70" height="36" viewBox="0 0 70 36" className="shrink-0">
        <path d="M0 36c8-8 20-11 35-11s27 3 35 11z" fill="#d9b183" />
        <path d="m10 13 8-3 6 1 8-3 3 15-9 3-5-1-9 5z" fill="#3f9b52" />
        <path d="m11 11 8-2 5 1 7-3 3 15-8 2-5-1-8 4z" fill="#eef0ea" stroke="#b9c4bb" />
        <path d="m14 15 5-2m-4 6 5-2m4-3 5-2" stroke="#9aa8b8" />
        <path d="m26 16 8-12 4 3-9 11z" fill="#f3a23a" />
        <path d="m34 4 2-3 4 2.500L38 7z" fill="#e8735c" />
        <path d="M48 6c0-6 9-6 9 0" fill="none" stroke="#2a4ea8" strokeWidth="2" />
        <path d="M43 14c0-13 18-13 18 0v13c0 4-18 4-18 0z" fill="#1a7cf0" />
        <path d="M45 20h14v7c-3 3-11 3-14 0z" fill="#1450d8" />
        <path d="M46 25c4 2 8 2 12 0" stroke="#c07cf0" fill="none" />
        <path d="M49 9h6v3h-6z" fill="#6fc0ff" />
      </svg>
    </label>
    <div className="ml-0.5 flex h-full">
      <TaskIcon label="エクスプローラー" state="open">
        <svg width="20" height="18" viewBox="0 0 20 18">
          <path d="M0 1h8l2 2h9v14H0z" fill="#f0b432" />
          <path d="M0 5h20v12H0z" fill="#ffd766" />
          <path d="M3 10h14v7h-4v-3H7v3H3z" fill="#4a9be0" />
        </svg>
      </TaskIcon>
      <TaskIcon label="Microsoft Store">
        <svg width="20" height="22" viewBox="0 0 20 22">
          <path d="M6 6V1.500h8V6" fill="none" stroke="#38a0dc" strokeWidth="2" />
          <rect x="0" y="5" width="20" height="16" rx="2" fill="#f5f5f5" />
          <path d="M6 9h3.500v3.500H6z" fill="#e5532d" />
          <path d="M10.500 9H14v3.500h-3.500z" fill="#7cb82f" />
          <path d="M6 13.500h3.500V17H6z" fill="#2fa3e0" />
          <path d="M10.500 13.500H14V17h-3.500z" fill="#f6b71c" />
        </svg>
      </TaskIcon>
      <TaskIcon label="コントロール パネル">
        <svg width="18" height="14" viewBox="0 0 18 14">
          <path d="M0 0h18v14H0z" fill="#7cc8f2" />
          <path d="M1 1h16v12H1z" fill="#a9dcf8" />
          <circle cx="5.500" cy="5.500" r="3" fill="#1e7fca" />
          <path d="M5.500 5.500v-3a3 3 0 0 1 3 3z" fill="#f3c53c" />
          <path d="M11 3h5M11 6h2m1 0h2M11 9h5M3 11h6" stroke="#1e7fca" />
        </svg>
      </TaskIcon>
      <TaskIcon label="切り取りツール">
        <svg width="18" height="22" viewBox="0 0 18 22" fill="none">
          <path d="M3 3c8-4 15 4 12 10-1 2-3 3-5 3" stroke="#d04a22" strokeWidth="3" />
          <path d="M4 6 8 13" stroke="#d04a22" strokeWidth="2" />
          <path d="M9 2v13M9 14l4-7" stroke="#e8e8e8" strokeWidth="2" />
          <circle cx="4" cy="17" r="2.300" stroke="#2f8fe0" strokeWidth="1.600" />
          <circle cx="11" cy="19" r="2.200" stroke="#2f8fe0" strokeWidth="1.600" />
          <path d="m6 16 3-2 1 3" stroke="#2f8fe0" strokeWidth="1.500" />
        </svg>
      </TaskIcon>
      <TaskIcon label="Inkscape">
        <svg width="20" height="20" viewBox="0 0 20 20">
          <path d="M10 0 19 9c2 2-1 3-4 3 2 1 1 2-1 2 1 2-2 3-4 5-2-2-6-2-3-4-3-1-2-2 0-3-4 0-8-1-6-3z" fill="#111" />
          <path d="M10 1 17 9c-3 2-5-1-7 0-2 2-4 1-7 0z" fill="#f2f2f2" />
          <path d="m14 5 4 5c-3 1-6 0-7-2z" fill="#7e93c4" />
          <path d="M7 14h5m-4 3h4" stroke="#aaa" />
        </svg>
      </TaskIcon>
      <TaskIcon label="Microsoft Edge">
        <svg width="22" height="22" viewBox="0 0 22 22">
          <circle cx="11" cy="11" r="10.500" fill="#1b74c9" />
          <path d="M.5 11C1-2 21-3 21.500 9c0 5-6 6-9 3 2-3-1-6-5-5-4 .5-6 3-7 4z" fill="#36c2d0" />
          <path d="M11 .5c6 0 10.500 4 10.500 9 0 4-5 5.500-8 3.500 4-2 2-9-2.500-12.500z" fill="#5fd86c" />
          <path d="M8 11c-1 6 5 9 10 7-4 4-10 4-13-1-1-3 0-5 3-6z" fill="#0c4a94" />
          <circle cx="5.500" cy="16.500" r="5" fill="#ccc" />
          <circle cx="5.500" cy="15" r="1.700" fill="#666" />
          <path d="M2.500 19.500c.5-3 5.500-3 6 0z" fill="#666" />
        </svg>
      </TaskIcon>
      <TaskIcon label="Excel" state="active"><ExcelLogo size={22} /></TaskIcon>
    </div>
    <div className="ml-auto flex h-full items-center">
      <Svg w={12} h={8}><path d="m1 6.500 5-5 5 5" stroke="#fff" strokeWidth="1.200" /></Svg>
      <span className="ml-2">
        <Svg w={15} h={12}>
          <path d="M5.500 4v-1.500h8v7h-10V8" stroke="#fff" />
          <path d="M6 4h6v4H6zM14 4.500h1v3h-1zM1 1.500h3v3H1zM2 4.500h1V9H2z" fill="#fff" stroke="#fff" strokeWidth=".5" />
        </Svg>
      </span>
      <span className="ml-2">
        <Svg w={13} h={13}>
          <path d="M1 12C1 6 6 2 12 1.500M4 12c0-4 3.500-7 8-7.500M7 12c0-2.500 2-4 5-4.500" stroke="#ddd" />
          <circle cx="10.500" cy="11.500" r="1" fill="#fff" stroke="none" />
        </Svg>
      </span>
      <span className="ml-[7px]">
        <Svg w={15} h={13}>
          <path d="M.5 4.500H3L6.500 1v11L3 8.500H.5zM8.500 4.500c1 1 1 3 0 4M10.500 3c2 2 2 5 0 7M12.500 1.500c2.500 3 2.500 7 0 10" stroke="#fff" />
        </Svg>
      </span>
      <span className="ml-2 text-base font-medium">A</span>
      <time className="ml-[9px] w-[53px] whitespace-nowrap text-center text-[10px] leading-4">19:18<br />2024/01/15</time>
      <button aria-label="通知" className="ml-[15px] mr-[22px]">
        <Svg w={15} h={15}><path d="M.5 1.500h14v10H10L7.500 14 5 11.500H.5z" stroke="#fff" strokeWidth="1.100" /></Svg>
      </button>
    </div>
  </div>
);

export default function App() {
  return (
    <div className="flex h-screen min-w-0 flex-col overflow-hidden bg-[#f0f0f0] font-['Noto_Sans_CJK_JP',sans-serif] text-[#222] [font-feature-settings:'palt']">
      <TitleBar />
      <TabRow />
      <Ribbon />
      <FormulaBar />
      <Sheet />
      <SheetTabs />
      <StatusBar />
      <Taskbar />
    </div>
  );
}
